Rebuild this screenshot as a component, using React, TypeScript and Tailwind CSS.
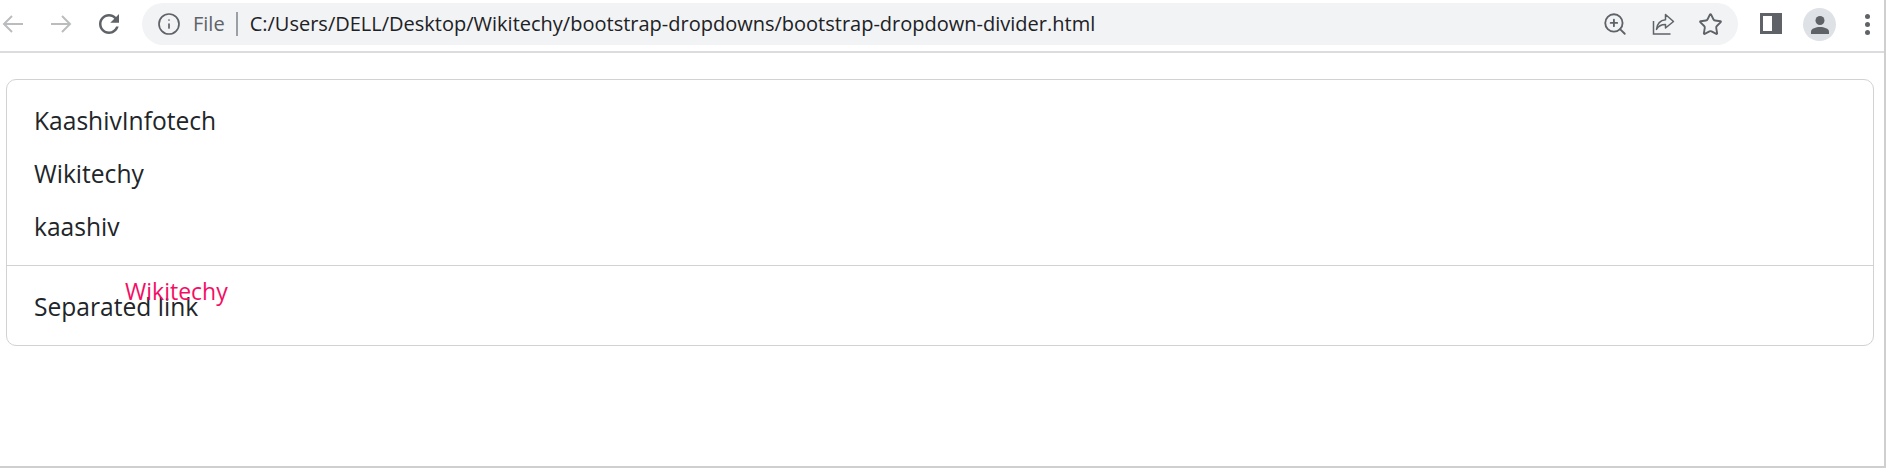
import React from "react";
import { Info, ZoomIn, Star } from "lucide-react";

const items = ["KaashivInfotech", "Wikitechy", "kaashiv"];

const NavArrow = ({ flip }: { flip?: boolean }) => (
  <svg
    width="24"
    height="24"
    viewBox="0 0 24 24"
    fill="none"
    stroke="#babcbe"
    strokeWidth="2"
    className={flip ? "rotate-180" : ""}
  >
    <path d="M22 12H3M11 4l-8 8 8 8" />
  </svg>
);

const ReloadIcon = () => (
  <svg width="30" height="30" viewBox="0 0 24 24" fill="#5f6368">
    <path d="M17.65 6.35C16.2 4.9 14.21 4 12 4c-4.42 0-7.99 3.58-7.99 8s3.57 8 7.99 8c3.73 0 6.84-2.55 7.73-6h-2.08c-.82 2.33-3.04 4-5.65 4-3.31 0-6-2.69-6-6s2.69-6 6-6c1.66 0 3.14.69 4.22 1.78L13 11h7V4l-2.35 2.35z" />
  </svg>
);

const ShareIcon = () => (
  <svg width="24" height="24" viewBox="0 0 24 24" fill="none" stroke="#5f6368" strokeWidth="1.5">
    <path d="M2.5 9v13h17" />
    <path d="M14.5 2.5 22.5 9.5l-8 6.5v-3.6c-4 0-7 1-9 5 .6-5.5 3.5-9 9-9.6z" strokeLinejoin="round" />
  </svg>
);

const SidePanelIcon = () => (
  <svg width="22" height="22" viewBox="0 0 22 22">
    <path fill="#5f6368" fillRule="evenodd" d="M0 0h22v21H0zM3 3v15h9V3z" />
  </svg>
);

const ProfileIcon = () => (
  <div className="flex h-[33px] w-[33px] items-center justify-center rounded-full bg-[#dee1e6]">
    <svg width="20" height="20" viewBox="0 0 20 20" fill="#5f6368">
      <circle cx="10" cy="5.5" r="4.5" />
      <path d="M1 19v-2.5C1 13.5 6 12 10 12s9 1.5 9 4.5V19z" />
    </svg>
  </div>
);

const Toolbar = () => (
  <div className="flex h-[53px] items-start border-b-2 border-[#dadce0] bg-white">
    <div className="flex h-[48px] items-center pl-[1px]">
      <NavArrow />
      <div className="ml-[24px]">
        <NavArrow flip />
      </div>
      <div className="ml-[21px]">
        <ReloadIcon />
      </div>
    </div>
    <div className="ml-[18px] mt-[3px] flex h-[42px] w-[1596px] items-center rounded-full bg-[#f1f3f4] pl-[15px] pr-[15px]">
      <Info size={24} color="#5f6368" strokeWidth={1.7} />
      <span className="ml-[12px] text-[20px] text-[#5f6368]">File</span>
      <div className="ml-[11px] h-[24px] w-[2px] bg-[#9aa0a6]" />
      <span className="ml-[12px] text-[20px] text-[#202124]">
        C:/Users/DELL/Desktop/Wikitechy/bootstrap-dropdowns/bootstrap-dropdown-divider.html
      </span>
      <div className="ml-auto flex items-center gap-[23px]">
        <ZoomIn size={26} color="#5f6368" strokeWidth={1.7} />
        <ShareIcon />
        <Star size={25} color="#5f6368" strokeWidth={1.8} />
      </div>
    </div>
    <div className="ml-[22px] mt-[13px]">
      <SidePanelIcon />
    </div>
    <div className="ml-[21px] mt-[8px]">
      <ProfileIcon />
    </div>
    <div className="ml-[29px] mt-[14px] flex flex-col gap-[3px]">
      <div className="h-[5px] w-[5px] rounded-full bg-[#5f6368]" />
      <div className="h-[5px] w-[5px] rounded-full bg-[#5f6368]" />
      <div className="h-[5px] w-[5px] rounded-full bg-[#5f6368]" />
    </div>
  </div>
);

export default function App() {
  return (
    <div className="h-[468px] w-[1886px] overflow-hidden border-b-2 border-r-2 border-[#cfcfcf] bg-white font-['Open_Sans','Noto_Sans',sans-serif]">
      <Toolbar />
      <div className="relative ml-[6px] mr-[10px] mt-[26px] h-[267px] rounded-[10px] border border-[#d2d2d2] pt-[15px] text-[24.6px] text-[#212529]">
        {items.map((item) => (
          <div key={item} className="flex h-[53px] items-center pl-[27px]">
            {item}
          </div>
        ))}
        <div className="mt-[11px] h-px bg-[#d2d2d2]" />
        <div className="mt-[15px] flex h-[53px] items-center pl-[27px]">Separated link</div>
        <span className="absolute left-[118px] top-[194px] text-[23px] text-[#f50d63]">Wikitechy</span>
      </div>
    </div>
  );
}
